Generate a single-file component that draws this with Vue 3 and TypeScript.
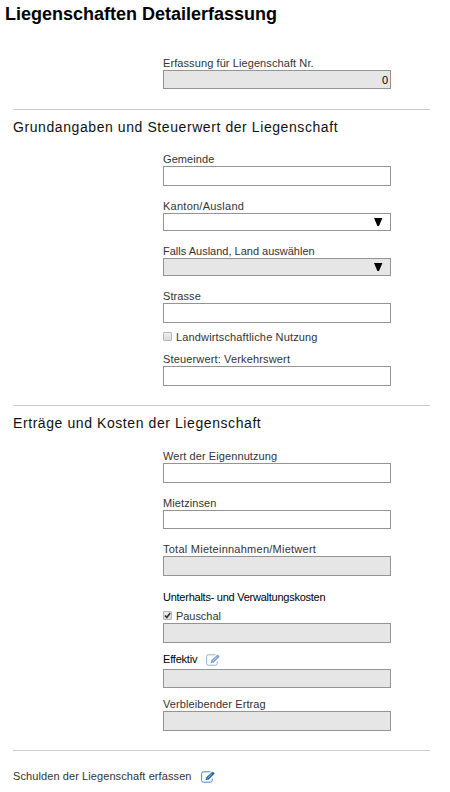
<script setup lang="ts">
import { ref } from 'vue'

const propertyNumber = ref('0')
const municipality = ref('')
const canton = ref('')
const country = ref('')
const street = ref('')
const agricultural = ref(false)
const taxValue = ref('')
const ownUse = ref('')
const rent = ref('')
const flatRate = ref(true)
</script>

<template>
  <main class="page">
    <h1 class="title"><span>Liegenschaften Detailerfassung</span></h1>

    <div class="field">
      <label class="label" for="nr">Erfassung für Liegenschaft Nr.</label>
      <input id="nr" v-model="propertyNumber" class="box short number" disabled />
    </div>

    <section class="section first">
      <h2 class="heading">Grundangaben und Steuerwert der Liegenschaft</h2>
      <div class="field">
        <label class="label" for="gemeinde">Gemeinde</label>
        <input id="gemeinde" v-model="municipality" class="box" />
      </div>
      <div class="field spaced">
        <label class="label wide" for="kanton">Kanton/Ausland</label>
        <div class="picker">
          <select id="kanton" v-model="canton" class="box select"></select>
          <svg class="arrow" viewBox="0 0 8 8"><path d="M0 0H8.4L5 8H3.4Z" /></svg>
        </div>
      </div>
      <div class="field spaced">
        <label class="label land" for="land">Falls Ausland, Land auswählen</label>
        <div class="picker">
          <select id="land" v-model="country" class="box select" disabled></select>
          <svg class="arrow" viewBox="0 0 8 8"><path d="M0 0H8.4L5 8H3.4Z" /></svg>
        </div>
      </div>
      <div class="field spaced">
        <label class="label" for="strasse">Strasse</label>
        <input id="strasse" v-model="street" class="box" />
      </div>
      <label class="option agri">
        <span class="tick">
          <input v-model="agricultural" class="check" type="checkbox" />
        </span>
        <span class="option-text">Landwirtschaftliche Nutzung</span>
      </label>
      <div class="field tax">
        <label class="label medium" for="steuerwert">Steuerwert: Verkehrswert</label>
        <input id="steuerwert" v-model="taxValue" class="box" />
      </div>
    </section>

    <section class="section">
      <h2 class="heading">Erträge und Kosten der Liegenschaft</h2>
      <div class="field">
        <label class="label" for="eigen">Wert der Eigennutzung</label>
        <input id="eigen" v-model="ownUse" class="box" />
      </div>
      <div class="field spaced">
        <label class="label" for="miete">Mietzinsen</label>
        <input id="miete" v-model="rent" class="box short" />
      </div>
      <div class="field spaced">
        <label class="label wide" for="total">Total Mieteinnahmen/Mietwert</label>
        <input id="total" class="box" disabled />
      </div>
      <h3 class="subheading">Unterhalts- und Verwaltungskosten</h3>
      <div class="field flat">
        <label class="option">
          <span class="tick">
            <input v-model="flatRate" class="check" type="checkbox" />
            <svg v-if="flatRate" class="mark" viewBox="0 0 9 9"><path d="M2 4.5L3.8 6.4L7.2 2" /></svg>
          </span>
          <span class="option-text pauschal">Pauschal</span>
        </label>
        <input class="box" disabled />
      </div>
      <div class="field close">
        <div class="effective">
          <label class="label dark" for="effektiv">Effektiv</label>
          <svg class="edit faded" viewBox="0 0 14 12">
            <path class="sheet" d="M9.5 .8H2.3Q.6 .8 .6 2.5V9.5Q.6 11.2 2.3 11.2H9.5Q11.2 11.2 11.2 9.5V7.5" />
            <path class="pencil" d="M4.6 9.3L5.2 6.5L11 .9Q11.5 .5 12 .9L13.3 2.1Q13.8 2.6 13.3 3.1L7.4 8.7Z" />
            <path class="shine" d="M6.6 7.1L11.2 2.6M5.5 7.5L6.4 8.4" />
          </svg>
        </div>
        <input id="effektiv" class="box short" disabled />
      </div>
      <div class="field close">
        <label class="label" for="ertrag">Verbleibender Ertrag</label>
        <input id="ertrag" class="box" disabled />
      </div>
    </section>

    <footer class="section debts">
      <span class="label">Schulden der Liegenschaft erfassen</span>
      <svg class="edit" viewBox="0 0 14 12">
        <path class="sheet" d="M9.5 .8H2.3Q.6 .8 .6 2.5V9.5Q.6 11.2 2.3 11.2H9.5Q11.2 11.2 11.2 9.5V7.5" />
        <path class="pencil" d="M4.6 9.3L5.2 6.5L11 .9Q11.5 .5 12 .9L13.3 2.1Q13.8 2.6 13.3 3.1L7.4 8.7Z" />
        <path class="shine" d="M6.6 7.1L11.2 2.6M5.5 7.5L6.4 8.4" />
      </svg>
    </footer>
  </main>
</template>

<style>
body {
  background: #fff;
}
</style>

<style scoped>
.page {
  box-sizing: border-box;
  width: 450px;
  height: 792px;
  padding: 0 20px 0 13px;
  overflow: hidden;
  font-family: "Liberation Sans", Arial, sans-serif;
  font-size: 11px;
  color: #333;
}
.title {
  height: 56px;
  margin: 0 0 0 -8px;
  font-size: 18px;
  line-height: 28px;
  color: #000;
  white-space: nowrap;
}
.field {
  display: flex;
  flex-direction: column;
  width: 228px;
  margin-left: 150px;
}
.spaced {
  margin-top: 13px;
}
.close {
  margin-top: 9px;
}
.tax {
  margin-top: 8px;
}
.flat {
  margin-top: 5px;
}
.label,
.option {
  height: 14px;
  line-height: 14px;
  letter-spacing: 0.09px;
  white-space: nowrap;
}
.wide {
  letter-spacing: 0.25px;
}
.medium,
.option {
  letter-spacing: 0.15px;
}
.land {
  letter-spacing: 0;
}
.pauschal {
  letter-spacing: -0.05px;
}
.box {
  display: block;
  box-sizing: border-box;
  width: 228px;
  height: 20px;
  margin: 0;
  padding: 0 2px;
  border: 1px solid #949494;
  border-radius: 0;
  background: #fff;
  font: 11px "Liberation Sans", Arial, sans-serif;
  color: #000;
  appearance: none;
  opacity: 1;
}
.box:disabled {
  background: #e6e6e6;
}
.short {
  height: 19px;
}
.number {
  text-align: right;
}
.picker {
  position: relative;
}
.select {
  height: 18px;
}
.arrow {
  position: absolute;
  top: 5px;
  right: 9px;
  width: 8px;
  height: 8px;
  overflow: visible;
  fill: #000;
  pointer-events: none;
}
.section {
  margin-top: 19px;
  border-top: 1px solid #ccc;
}
.first {
  margin-top: 20px;
}
.heading {
  height: 43px;
  margin: 0;
  font-size: 14px;
  font-weight: 400;
  line-height: 35px;
  letter-spacing: 0.58px;
  color: #111;
  white-space: nowrap;
}
.first .heading {
  height: 42px;
}
.option {
  display: flex;
}
.agri {
  margin: 7px 0 0 150px;
}
.tick {
  position: relative;
  width: 9px;
  height: 9px;
  margin: 2px 4px 0 0;
}
.check {
  display: block;
  box-sizing: border-box;
  width: 9px;
  height: 9px;
  margin: 0;
  border: 1px solid #b5b5b5;
  border-radius: 1px;
  background: linear-gradient(#eee, #ddd);
  appearance: none;
}
.mark {
  position: absolute;
  top: 0;
  left: 0;
  width: 9px;
  height: 9px;
  fill: none;
  stroke: #333;
  stroke-width: 1.6;
}
.subheading {
  height: 14px;
  margin: 14px 0 0 150px;
  font-size: 11px;
  font-weight: 400;
  line-height: 14px;
  letter-spacing: -0.25px;
  color: #000;
  white-space: nowrap;
}
.effective {
  display: flex;
  height: 17px;
}
.dark {
  letter-spacing: -0.2px;
  color: #000;
}
.edit {
  width: 14px;
  height: 12px;
  margin: 2px 0 0 9px;
}
.faded {
  opacity: 0.6;
}
.sheet {
  fill: none;
  stroke: #3a76b5;
  stroke-width: 0.9;
}
.pencil {
  fill: #1c5fa8;
}
.shine {
  fill: none;
  stroke: #fff;
  stroke-width: 0.6;
}
.debts {
  display: flex;
  padding-top: 18px;
}
</style>
